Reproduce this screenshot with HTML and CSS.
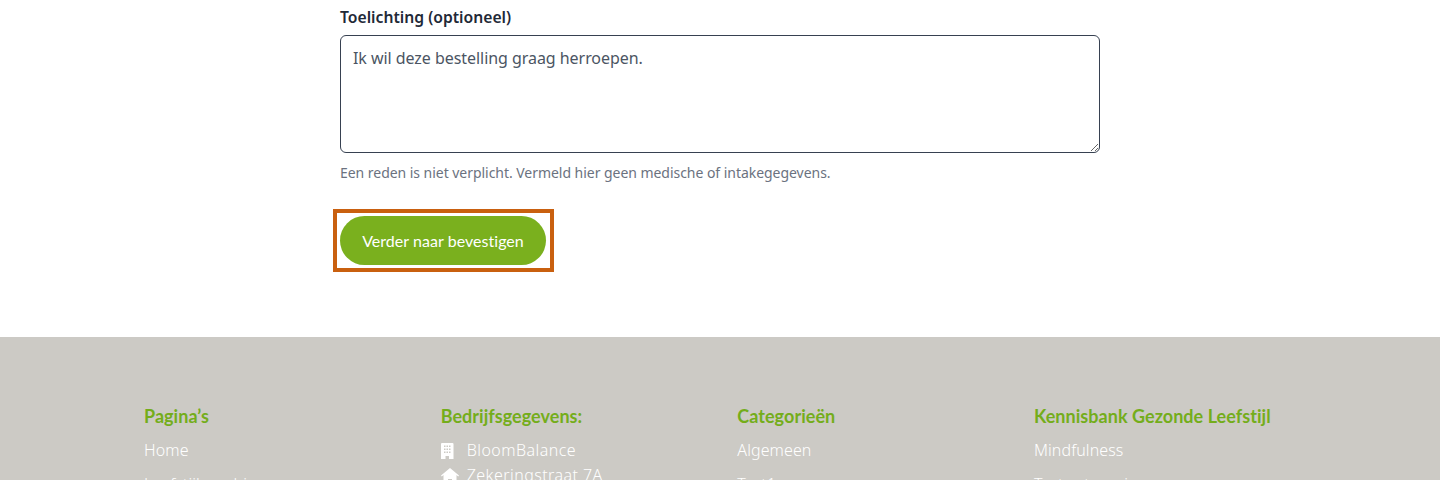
FILE: index.html
```html
<!DOCTYPE html>
<html lang="nl">

<head>
    <meta charset="UTF-8">
    <title>Bestelling herroepen</title>
    <link rel="stylesheet" href="styles.css">
</head>

<body>
    <main class="form-section">
        <form class="revoke-form">
            <label class="field-label" for="reason">Toelichting (optioneel)</label>
            <textarea class="field-input" id="reason">Ik wil deze bestelling graag herroepen.</textarea>
            <p class="field-hint">Een reden is niet verplicht. Vermeld hier geen medische of intakegegevens.</p>
            <div class="focus-ring">
                <button class="submit-button" type="button">Verder naar bevestigen</button>
            </div>
        </form>
    </main>

    <footer class="site-footer">
        <div class="footer-grid">
            <div class="footer-col">
                <h3>Pagina’s</h3>
                <ul class="footer-links">
                    <li>Home</li>
                    <li>Leefstijlcoaching</li>
                </ul>
            </div>
            <div class="footer-col">
                <h3>Bedrijfsgegevens:</h3>
                <ul class="footer-contact">
                    <li>
                        <svg class="contact-icon" viewBox="0 0 18 16" aria-hidden="true">
                            <path fill-rule="evenodd" d="M1 0h10.500a1 1 0 0 1 1 1v15H8v-3H4.500v3H0V1a1 1 0 0 1 1-1zM3 2.500v1.500h1.500V2.500zm2.500 0v1.500H7V2.500zm2.500 0v1.500h1.500V2.500zM3 5.500V7h1.500V5.500zm2.500 0V7H7V5.500zm2.500 0V7h1.500V5.500zM3 8.500V10h1.500V8.500zm2.500 0V10H7V8.500zm2.500 0V10h1.500V8.500z" />
                        </svg>
                        BloomBalance
                    </li>
                    <li>
                        <svg class="contact-icon" viewBox="0 0 18 16" aria-hidden="true">
                            <path d="M9 0l9 7.500-.8 1L15.500 7v9h-4.500v-5H7v5H2.500V7L.8 8.500 0 7.500z" />
                        </svg>
                        Zekeringstraat 7A
                    </li>
                </ul>
            </div>
            <div class="footer-col">
                <h3>Categorieën</h3>
                <ul class="footer-links">
                    <li>Algemeen</li>
                    <li>Test1</li>
                </ul>
            </div>
            <div class="footer-col">
                <h3>Kennisbank Gezonde Leefstijl</h3>
                <ul class="footer-links">
                    <li>Mindfulness</li>
                    <li>Test categorie</li>
                </ul>
            </div>
        </div>
    </footer>
</body>

</html>
```

FILE: styles.css
```css
html,
body {
    height: 480px;
    overflow: hidden;
}

body {
    margin: 0;
    font-family: "Noto Sans", Arial, sans-serif;
    background-color: #ffffff;
}

.form-section {
    height: 337px;
    box-sizing: border-box;
    padding: 8px 340px 0;
}

.revoke-form {
    display: flex;
    flex-direction: column;
    align-items: flex-start;
}

.field-label {
    font-size: 15.700px;
    line-height: 19px;
    font-weight: 600;
    color: #1f2937;
    margin-bottom: 8px;
}

.field-input {
    box-sizing: border-box;
    width: 760px;
    height: 118px;
    padding: 10px 12px;
    border: 1px solid #374151;
    border-radius: 6px;
    background: #ffffff;
    font-family: inherit;
    font-size: 16px;
    line-height: 24px;
    letter-spacing: -0.05px;
    color: #4b5563;
    outline: none;
}

.field-hint {
    margin: 11px 0 0;
    font-size: 14px;
    line-height: 18px;
    letter-spacing: -0.04px;
    color: #6b7280;
}

.focus-ring {
    margin: 27px 0 0 -7px;
    padding: 3px 4px 3px 3px;
    border: 4px solid #c9600f;
    display: flex;
}

.submit-button {
    width: 206px;
    height: 49px;
    border: none;
    border-radius: 25px;
    background-color: #7ab01e;
    color: #ffffff;
    font-family: Lato, sans-serif;
    font-size: 16px;
    letter-spacing: 0.04px;
}

.site-footer {
    height: 143px;
    background-color: #cccac5;
    padding: 68px 110px 0 144px;
    box-sizing: border-box;
    overflow: hidden;
}

.footer-grid {
    display: grid;
    grid-template-columns: repeat(4, 296.670px);
}

.footer-col h3 {
    margin: 0 0 11px;
    font-family: Lato, sans-serif;
    font-size: 18px;
    line-height: 22px;
    font-weight: 700;
    letter-spacing: 0.04px;
    color: #74ad1b;
}

.footer-links,
.footer-contact {
    list-style: none;
    margin: 0;
    padding: 0;
    font-size: 16px;
    font-weight: 300;
    color: #ffffff;
}

.footer-links li {
    line-height: 24px;
    margin-bottom: 10px;
    letter-spacing: 0.1px;
}

.footer-contact li {
    display: flex;
    align-items: center;
    gap: 8px;
    line-height: 25px;
    letter-spacing: 0.45px;
}

.contact-icon {
    width: 18px;
    height: 16px;
    flex: none;
    fill: #ffffff;
}
```
